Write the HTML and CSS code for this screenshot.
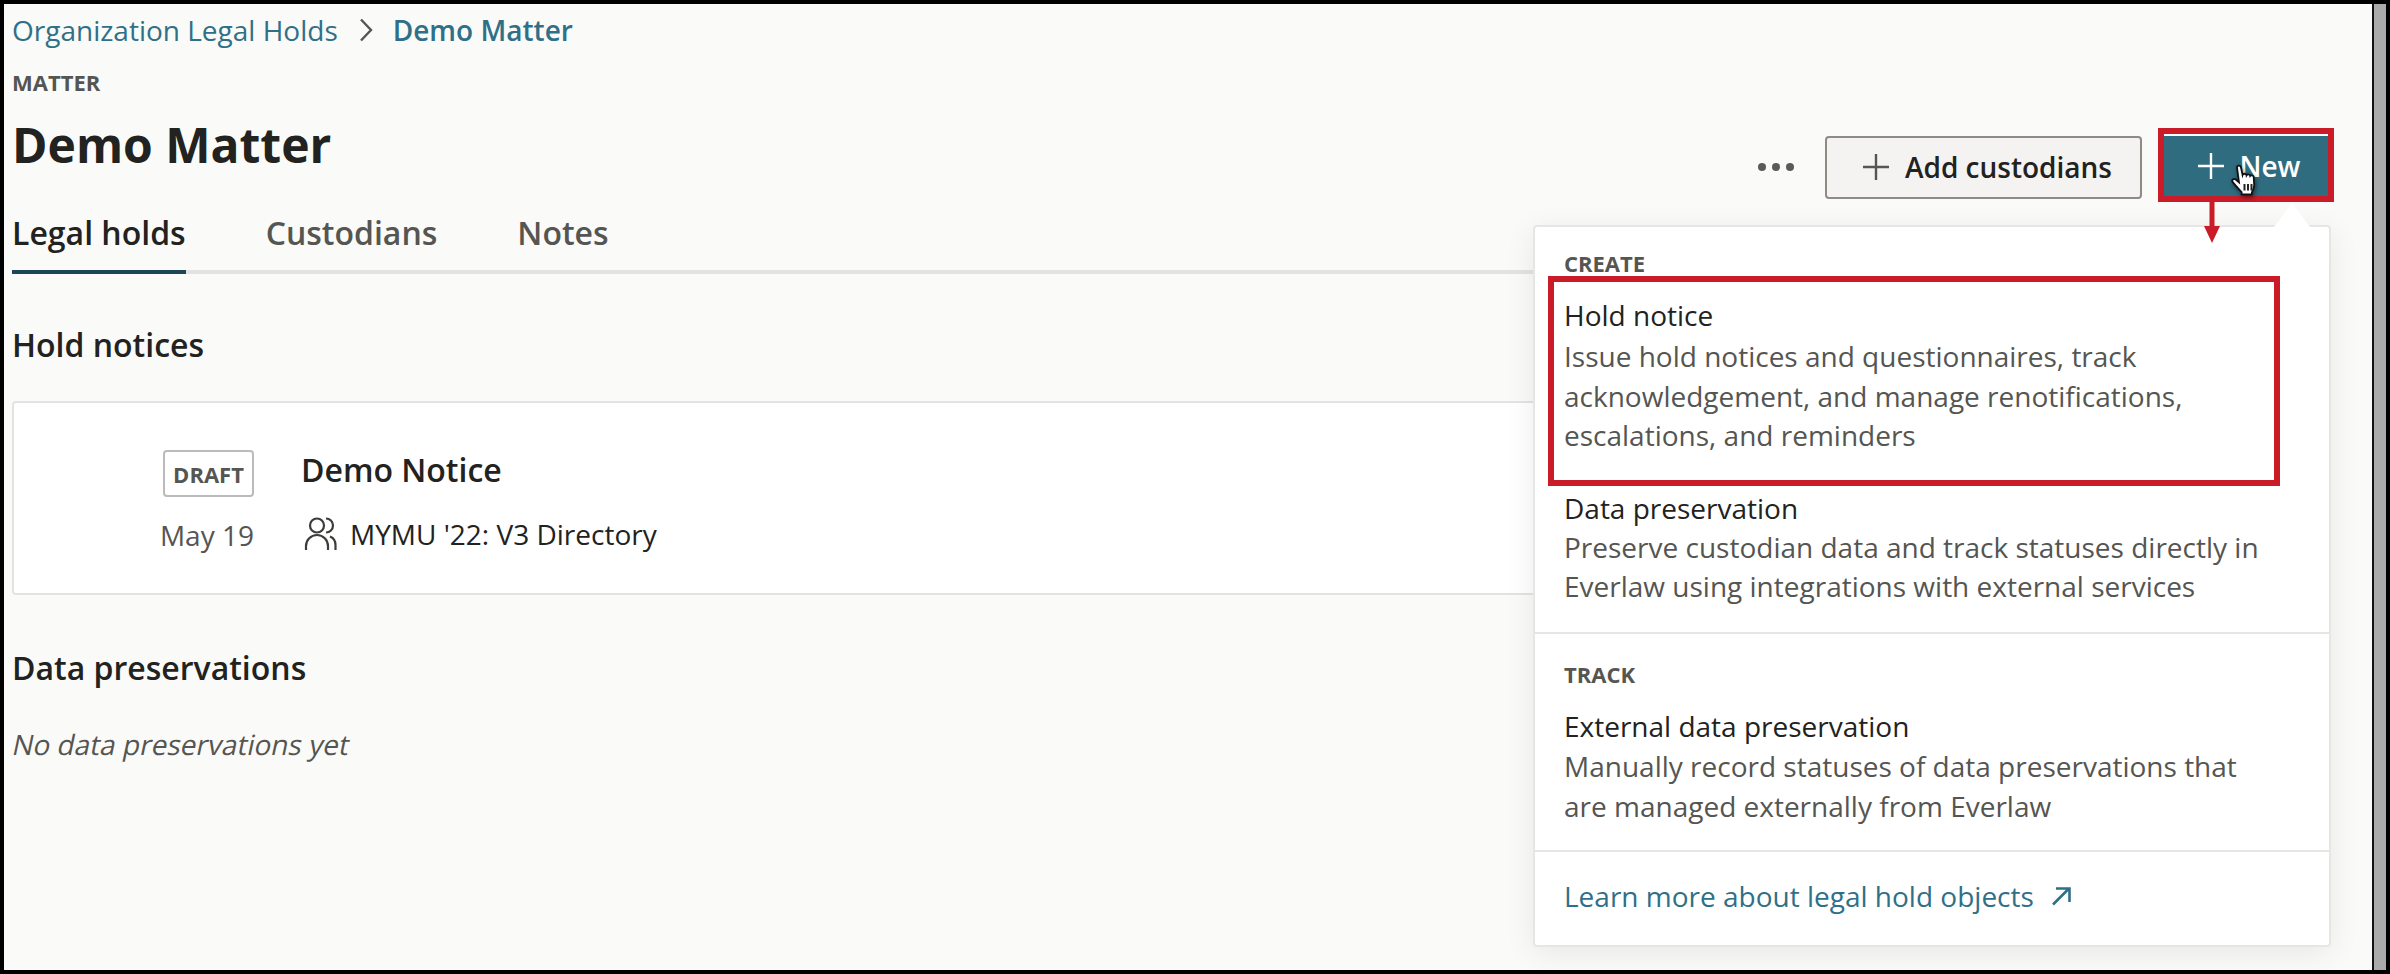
FILE: index.html
```html
<!DOCTYPE html>
<html lang="en">
<head>
<meta charset="utf-8">
<title>Demo Matter</title>
<link rel="stylesheet" href="styles.css">
</head>
<body>
<div class="frame">
  <main class="page">
    <nav class="crumbs">
      <a class="crumb">Organization Legal Holds</a>
      <svg class="chev" viewBox="0 0 14 24"><path d="M2 1.500 L12 12 L2 22.500"/></svg>
      <a class="crumb current">Demo Matter</a>
    </nav>
    <div class="eyebrow">MATTER</div>
    <header class="head">
      <h1 class="title">Demo Matter</h1>
      <div class="actions">
        <div class="dots"><i></i><i></i><i></i></div>
        <button class="btn secondary"><svg class="plus" viewBox="0 0 26 26"><path d="M13 0V26M0 13H26"/></svg>Add custodians</button>
        <button class="btn primary"><svg class="plus" viewBox="0 0 26 26"><path d="M13 0V26M0 13H26"/></svg>New</button>
      </div>
    </header>
    <div class="tabs">
      <span class="tab active">Legal holds</span>
      <span class="tab">Custodians</span>
      <span class="tab">Notes</span>
    </div>
    <h2 class="section first">Hold notices</h2>
    <article class="card">
      <div class="card-left">
        <span class="badge">DRAFT</span>
        <span class="date">May 19</span>
      </div>
      <div class="card-right">
        <div class="notice">Demo Notice</div>
        <div class="dir">
          <svg class="people" viewBox="0 0 33 34"><circle cx="13" cy="8.500" r="7"/><path d="M22 1.500a7 7 0 0 1 0 14M2 33v-4a11 11 0 0 1 22 0v4M26 19.500a9 9 0 0 1 5.500 8.500v5"/></svg>
          <span>MYMU '22: V3 Directory</span>
        </div>
      </div>
    </article>
    <h2 class="section second">Data preservations</h2>
    <p class="empty">No data preservations yet</p>

    <aside class="menu">
      <div class="menu-group group-create">
        <div class="menu-label">CREATE</div>
        <div class="item item-hold">
          <div class="item-title">Hold notice</div>
          <div class="item-desc">Issue hold notices and questionnaires, track<br>acknowledgement, and manage renotifications,<br>escalations, and reminders</div>
        </div>
        <div class="item">
          <div class="item-title">Data preservation</div>
          <div class="item-desc">Preserve custodian data and track statuses directly in<br>Everlaw using integrations with external services</div>
        </div>
      </div>
      <div class="menu-group group-track">
        <div class="menu-label">TRACK</div>
        <div class="item">
          <div class="item-title">External data preservation</div>
          <div class="item-desc">Manually record statuses of data preservations that<br>are managed externally from Everlaw</div>
        </div>
      </div>
      <div class="menu-foot">
        <a class="learn">Learn more about legal hold objects</a>
        <svg class="ext" viewBox="0 0 22 20"><path d="M3 18.500 L19 2.500M6 2.500H19.500V16"/></svg>
      </div>
    </aside>
    <div class="caret"></div>

    <div class="mark mark-new"></div>
    <div class="mark mark-hold"></div>
    <svg class="mark-arrow" viewBox="0 0 16 41"><path d="M5.500 0H10.500V24H16L8 41L0 24H5.500Z"/></svg>
    <svg class="cursor" viewBox="0 0 30 32"><path d="M7 3.500c0-2.600 3.600-2.600 4 0l1.600 7.500c.6-1.800 3.600-1.600 3.900.3.8-1.500 3.400-1.200 3.700.6.9-1.100 3.300-.7 3.500 1.200l.5 8c0 3-1.200 5-2.300 7.200v2.200H11.600v-2.400c-2.200-2-5.100-5.400-8.900-9.900-1.600-2.200 1.100-4.200 3-2.700l3.300 2.800z"/><path class="stripes" d="M14.500 20v6.500M18 20v6.500M21.500 20v6.500"/></svg>
  </main>
  <div class="strip"></div>
</div>
</body>
</html>
```
FILE: styles.css
```css
* { box-sizing: border-box; }
html, body { margin: 0; height: 100%; overflow: hidden; background: #000; }
body { font-family: "Open Sans", "Liberation Sans", sans-serif; color: #222220; }
.frame { display: flex; height: 100vh; padding: 4px; background: #000; }
.page { position: relative; flex: 1; background: #fafaf8; padding: 0 44px 0 8px; overflow: hidden; }
.strip { width: 14px; border-left: 2px solid #111; background: #aaa; }

.crumbs { display: flex; align-items: center; height: 52px; }
.crumb { font-size: 28px; color: #2f7088; }
.crumb.current { font-weight: 600; }
.chev { width: 14px; height: 24px; margin: 0 20px 0 21px; fill: none; stroke: #555; stroke-width: 2.400; }
.eyebrow { font-size: 22px; font-weight: 700; color: #555552; line-height: 28px; margin-top: 12px; }

.head { display: flex; justify-content: space-between; align-items: center; height: 98px; }
.title { margin: 0; font-size: 48px; font-weight: 700; line-height: 60px; }
.actions { display: flex; align-items: center; margin-top: 44px; }
.dots { display: flex; gap: 6px; margin-right: 31px; }
.dots i { width: 8px; height: 8px; border-radius: 50%; background: #5a5a58; }
.btn { display: flex; align-items: center; justify-content: center; font: 600 28px "Open Sans", sans-serif; padding: 0; }
.plus { width: 26px; height: 26px; margin-right: 16px; fill: none; stroke-width: 2.400; }
.secondary { width: 317px; height: 63px; padding-left: 8px; background: #f4f3f1; border: 2px solid #8d8b84; border-radius: 4px; color: #222220; margin-right: 22px; }
.secondary .plus { stroke: #555; }
.primary { width: 164px; height: 62px; margin-top: -5px; padding-left: 6px; background: #2f6c80; border: 0; border-top: 2px solid #fff; color: #fff; }
.primary .plus { stroke: #fff; }

.tabs { display: flex; gap: 80px; height: 80px; border-bottom: 4px solid #e3e3e1; }
.tab { font-size: 32px; font-weight: 600; color: #555552; line-height: 78px; height: 80px; }
.tab.active { color: #222220; border-bottom: 4px solid #1c4656; }

.section { margin: 0; font-size: 32px; font-weight: 600; line-height: 40px; }
.first { margin-top: 51px; }
.second { margin-top: 53px; }
.card { display: flex; height: 194px; margin: 36px 0 0; background: #fff; border: 2px solid #e3e3e1; border-radius: 4px; padding-top: 47px; }
.card-left { display: flex; flex-direction: column; align-items: flex-end; width: 240px; }
.badge { display: flex; align-items: center; justify-content: center; width: 91px; height: 47px; border: 2px solid #bbb; border-radius: 4px; font-size: 22px; font-weight: 700; color: #555552; }
.date { font-size: 28px; line-height: 40px; margin-top: 18px; color: #555552; }
.card-right { margin-left: 47px; }
.notice { font-size: 32px; font-weight: 600; line-height: 40px; }
.dir { display: flex; align-items: center; gap: 13px; font-size: 28px; line-height: 40px; margin-top: 24px; margin-left: 3px; }
.people { width: 33px; height: 34px; fill: none; stroke: #3c3c3a; stroke-width: 2.200; }
.empty { margin: 36px 0 0 -3px; font-size: 28px; color: #555552; line-height: 40px; transform: skewX(-12deg); transform-origin: left bottom; }

.menu { position: absolute; left: 1529px; top: 221px; width: 798px; height: 722px; background: #fff; border: 2px solid #e6e6e4; border-radius: 4px; box-shadow: 0 6px 30px rgba(0,0,0,.08); }
.caret { position: absolute; left: 2270px; top: 199px; width: 0; height: 0; border-left: 18px solid transparent; border-right: 18px solid transparent; border-bottom: 24px solid #fff; }
.menu-group { padding: 0 29px; border-bottom: 2px solid #e6e6e4; }
.group-create { height: 407px; padding-top: 22px; }
.group-track { height: 218px; padding-top: 26px; }
.menu-label { font-size: 22px; font-weight: 700; color: #555552; line-height: 28px; }
.item { margin-top: 16px; }
.item-hold { margin-bottom: 32px; margin-top: 18px; }
.item-hold .item-desc { margin-top: 2px; }
.group-track .item { margin-top: 18px; }
.group-track .item-desc { margin-top: 1px; }
.item-title { font-size: 28px; line-height: 40px; color: #222220; }
.item-desc { font-size: 28px; line-height: 39.6px; color: #555552; }
.menu-foot { display: flex; align-items: center; gap: 16px; padding: 24px 29px 0; }
.learn { font-size: 28px; line-height: 40px; color: #2f7088; }
.ext { width: 22px; height: 20px; fill: none; stroke: #2f7088; stroke-width: 2.600; }

.mark { position: absolute; border: 6px solid #c91c28; pointer-events: none; }
.mark-new { left: 2154px; top: 124px; width: 176px; height: 74px; }
.mark-hold { left: 1544px; top: 272px; width: 732px; height: 210px; }
.mark-arrow { position: absolute; left: 2200px; top: 198px; width: 16px; height: 41px; fill: #c91c28; }
.cursor { position: absolute; left: 2226px; top: 160px; width: 30px; height: 32px; fill: #fff; stroke: #111; stroke-width: 1.800; filter: drop-shadow(1px 2px 2px rgba(0,0,0,.5)); }
.cursor .stripes { fill: none; stroke: #222; stroke-width: 2; }
```
